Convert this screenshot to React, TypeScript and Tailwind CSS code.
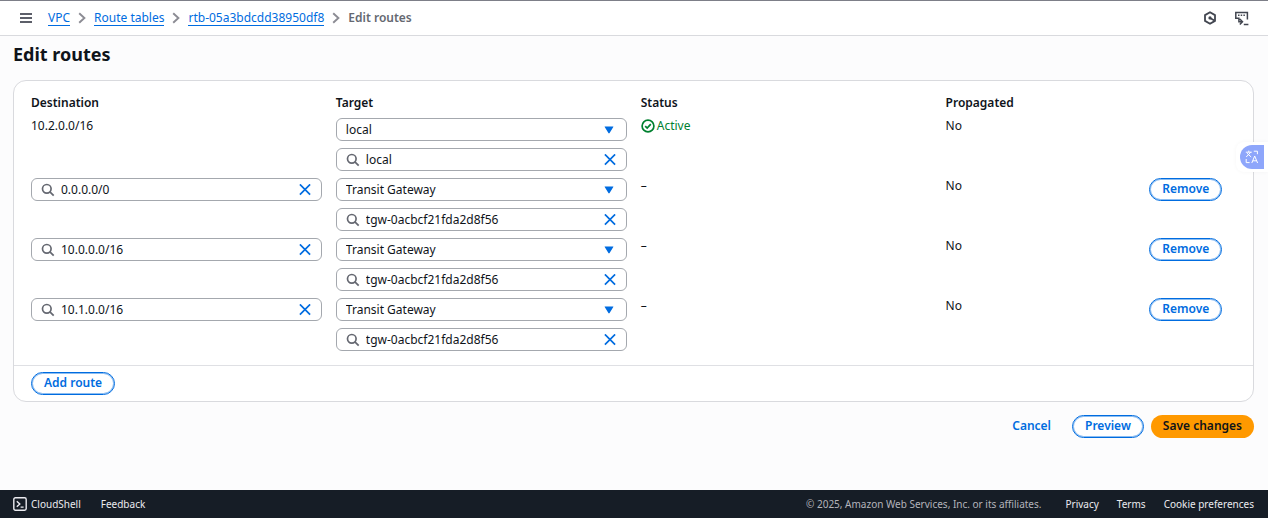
import type { ReactNode } from "react";

type Route = { destination: string; editable: boolean; target: string; targetId: string };

const routes: Route[] = [
  { destination: "10.2.0.0/16", editable: false, target: "local", targetId: "local" },
  { destination: "0.0.0.0/0", editable: true, target: "Transit Gateway", targetId: "tgw-0acbcf21fda2d8f56" },
  { destination: "10.0.0.0/16", editable: true, target: "Transit Gateway", targetId: "tgw-0acbcf21fda2d8f56" },
  { destination: "10.1.0.0/16", editable: true, target: "Transit Gateway", targetId: "tgw-0acbcf21fda2d8f56" },
];

function SearchField({ label, value }: { label: string; value: string }) {
  return (
    <div className="flex h-[23px] items-center rounded-[6px] border border-[#a4a8ae] bg-white pr-2.5 pl-[9px]">
      <svg viewBox="0 0 14 14" className="size-3.5 shrink-0" fill="none" stroke="#656871" strokeWidth="1.7">
        <circle cx="5.8" cy="5.8" r="4.3" />
        <path d="M8.9 8.9l3.8 3.8" />
      </svg>
      <input
        type="text"
        aria-label={label}
        defaultValue={value}
        className="ml-1.5 h-5 w-full min-w-0 bg-transparent text-[12px] leading-5 outline-none"
      />
      <button type="button" aria-label={`Clear ${label}`} className="shrink-0">
        <svg viewBox="0 0 12 12" className="block size-3" fill="none" stroke="#006ce0" strokeWidth="1.7">
          <path d="M.9 .4l10.2 10.2M11.1 .4L.9 10.6" />
        </svg>
      </button>
    </div>
  );
}

function TargetSelect({ label, value }: { label: string; value: string }) {
  return (
    <div className="grid h-[23px] items-center rounded-[6px] border border-[#a4a8ae] bg-white">
      <select
        aria-label={label}
        defaultValue={value}
        className="col-start-1 row-start-1 h-5 w-full appearance-none bg-transparent px-[9px] text-[12px] leading-5 outline-none"
      >
        <option>local</option>
        <option>Transit Gateway</option>
      </select>
      <svg
        viewBox="0 0 10 8"
        className="pointer-events-none col-start-1 row-start-1 mr-3 h-2 w-2.5 justify-self-end"
        fill="#006ce0"
      >
        <path d="M1 .4h8a.4.4 0 0 1 .3.7L5.6 7a.7.7 0 0 1-1.2 0L.7 1.1A.4.4 0 0 1 1 .4z" />
      </svg>
    </div>
  );
}

function OutlineButton({ children }: { children: ReactNode }) {
  return (
    <button
      type="button"
      className="h-[23px] rounded-full border border-[#006ce0] bg-white px-3 pb-px text-[12px] leading-4 font-semibold text-[#006ce0] ring-1 ring-[#006ce0]/45 ring-inset"
    >
      {children}
    </button>
  );
}

function Chevron() {
  return (
    <svg viewBox="0 0 8 12" className="h-3 w-2 shrink-0" fill="none" stroke="#8c8c94" strokeWidth="1.9">
      <path d="M1.2 1.2L6.4 6l-5.2 4.8" />
    </svg>
  );
}

function Crumb({ children }: { children: ReactNode }) {
  return (
    <a href="#" className="border-b border-[#006ce0] leading-[15px] text-[#006ce0]">
      {children}
    </a>
  );
}

export default function App() {
  return (
    <div className="relative flex min-h-screen flex-col bg-[#fcfcfd] font-['Noto_Sans','Open_Sans',sans-serif] text-[12px] leading-4 text-[#0f141a]">
      <header className="flex h-9 items-center justify-between border-t border-b border-t-[#7d7f88] border-b-[#d9dade] bg-white pr-[19px] pl-5">
        <nav aria-label="Breadcrumb" className="flex items-center gap-2">
          <button type="button" aria-label="Open navigation" className="mr-2">
            <svg viewBox="0 0 12 12" className="block size-3" stroke="#5c5f69" strokeWidth="2">
              <path d="M0 2h12M0 6h12M0 10h12" />
            </svg>
          </button>
          <Crumb>VPC</Crumb>
          <Chevron />
          <Crumb>Route tables</Crumb>
          <Chevron />
          <Crumb>rtb-05a3bdcdd38950df8</Crumb>
          <Chevron />
          <span className="font-semibold text-[#656871]">Edit routes</span>
        </nav>
        <div className="flex items-center gap-[17px]">
          <button type="button" aria-label="Amazon Q">
            <svg viewBox="0 0 14 14" className="block size-3.5" fill="none" stroke="#424650" strokeWidth="1.8">
              <path d="M7 1.2l5 2.9v5.8L7 12.8 2 9.9V4.1z" strokeLinejoin="round" />
              <circle cx="7" cy="6.9" r="1.6" fill="#424650" stroke="none" />
              <path d="M7 6.9l4.4 2.6" />
            </svg>
          </button>
          <button type="button" aria-label="Tools">
            <svg viewBox="0 0 15 15" className="block size-[15px]" fill="none" stroke="#424650" strokeWidth="1.5">
              <path d="M1.8 8V1.6h11.6v7" />
              <path d="M4 4.2h7.5" strokeDasharray="1.5 1.2" />
              <path d="M1.1 7.2h3.8v3.6h3M5.8 8l2.7 2.8-2.7 2.8M9.8 13.4h4.6" />
            </svg>
          </button>
        </div>
      </header>

      <main className="pr-[14px] pl-[13px]">
        <h1 className="mt-1.5 text-[18px] leading-6 font-bold">Edit routes</h1>

        <section className="mt-[14px] rounded-[13px] border border-[#d9dade] bg-white">
          <div className="px-[17px] pt-[14px] pb-[7px]">
            <table className="w-full table-fixed border-collapse text-left">
              <colgroup>
                <col className="w-[25.3%]" />
                <col className="w-[25.3%]" />
                <col className="w-[25.3%]" />
                <col className="w-[16.9%]" />
                <col />
              </colgroup>
              <thead>
                <tr className="h-[23px] align-top">
                  <th className="p-0 font-semibold">Destination</th>
                  <th className="p-0 font-semibold">Target</th>
                  <th className="p-0 font-semibold">Status</th>
                  <th className="p-0 font-semibold">Propagated</th>
                  <td className="p-0" />
                </tr>
              </thead>
              <tbody>
                {routes.map((route, i) => (
                  <tr key={route.destination} className="h-[60px] align-top">
                    <td className="p-0 pr-[14px]">
                      {route.editable ? (
                        <SearchField label={`Destination ${i + 1}`} value={route.destination} />
                      ) : (
                        route.destination
                      )}
                    </td>
                    <td className="p-0 pr-[14px]">
                      <div className="flex flex-col gap-[7px]">
                        <TargetSelect label={`Target type ${i + 1}`} value={route.target} />
                        <SearchField label={`Target ${i + 1}`} value={route.targetId} />
                      </div>
                    </td>
                    <td className="p-0">
                      {route.editable ? (
                        "–"
                      ) : (
                        <span className="flex items-center gap-0.5 text-[#00802f]">
                          <svg viewBox="0 0 14 14" className="size-3.5" fill="none" stroke="#00802f" strokeWidth="1.7">
                            <circle cx="7" cy="7" r="5.9" />
                            <path d="M4.2 7.1l2 2 3.6-4" />
                          </svg>
                          Active
                        </span>
                      )}
                    </td>
                    <td className="p-0">No</td>
                    <td className="p-0">{route.editable && <OutlineButton>Remove</OutlineButton>}</td>
                  </tr>
                ))}
              </tbody>
            </table>
          </div>
          <div className="border-t border-[#dfe0e4] px-[17px] py-[6px]">
            <OutlineButton>Add route</OutlineButton>
          </div>
        </section>

        <div className="mt-[13px] flex justify-end gap-[7px]">
          <button type="button" className="mr-[14px] h-[23px] pb-px font-semibold text-[#006ce0]">
            Cancel
          </button>
          <OutlineButton>Preview</OutlineButton>
          <button type="button" className="h-[23px] rounded-full bg-[#ff9900] px-3 pb-px font-semibold">
            Save changes
          </button>
        </div>
      </main>

      <footer className="mt-auto flex h-7 items-center bg-[#161d26] pr-[14px] pl-[13px] text-[10px] text-[#ebebf0]">
        <button type="button" className="flex items-center gap-1">
          <svg viewBox="0 0 14 14" className="size-3.5" fill="none" stroke="#ebebf0" strokeWidth="1.4">
            <rect x=".8" y=".8" width="12.4" height="12.4" rx="1.6" />
            <path d="M3.8 4.2l3 2.8-3 2.8M7.6 10.1h3" />
          </svg>
          CloudShell
        </button>
        <a href="#" className="ml-5">Feedback</a>
        <span className="ml-auto text-[#b4b4bb]">© 2025, Amazon Web Services, Inc. or its affiliates.</span>
        <a href="#" className="ml-6">Privacy</a>
        <a href="#" className="ml-[18px]">Terms</a>
        <a href="#" className="ml-[18px]">Cookie preferences</a>
      </footer>

      <div className="absolute top-[142px] right-0 rounded-l-lg bg-white py-[3px] pr-1 pl-1 shadow-[0_0_4px_rgba(0,0,0,0.04)]">
        <button
          type="button"
          aria-label="Translate"
          className="flex h-6 w-6 items-center justify-center rounded-l-full rounded-r-[3px] bg-[#8ea6fb]"
        >
          <svg viewBox="0 0 14 14" className="size-3.5" fill="none" stroke="#ffffff" strokeWidth="1">
            <path d="M.8 2.2h6M3.8.6v1.6M1.2 7l4.6-4.8M2 3.2L6.2 7" />
            <path d="M6.8 13l2.9-7 2.9 7M7.9 10.8h3.6" />
            <path d="M8.8 1.2h3.6v3M1.2 9v3.6h3.4" />
          </svg>
        </button>
      </div>
    </div>
  );
}
